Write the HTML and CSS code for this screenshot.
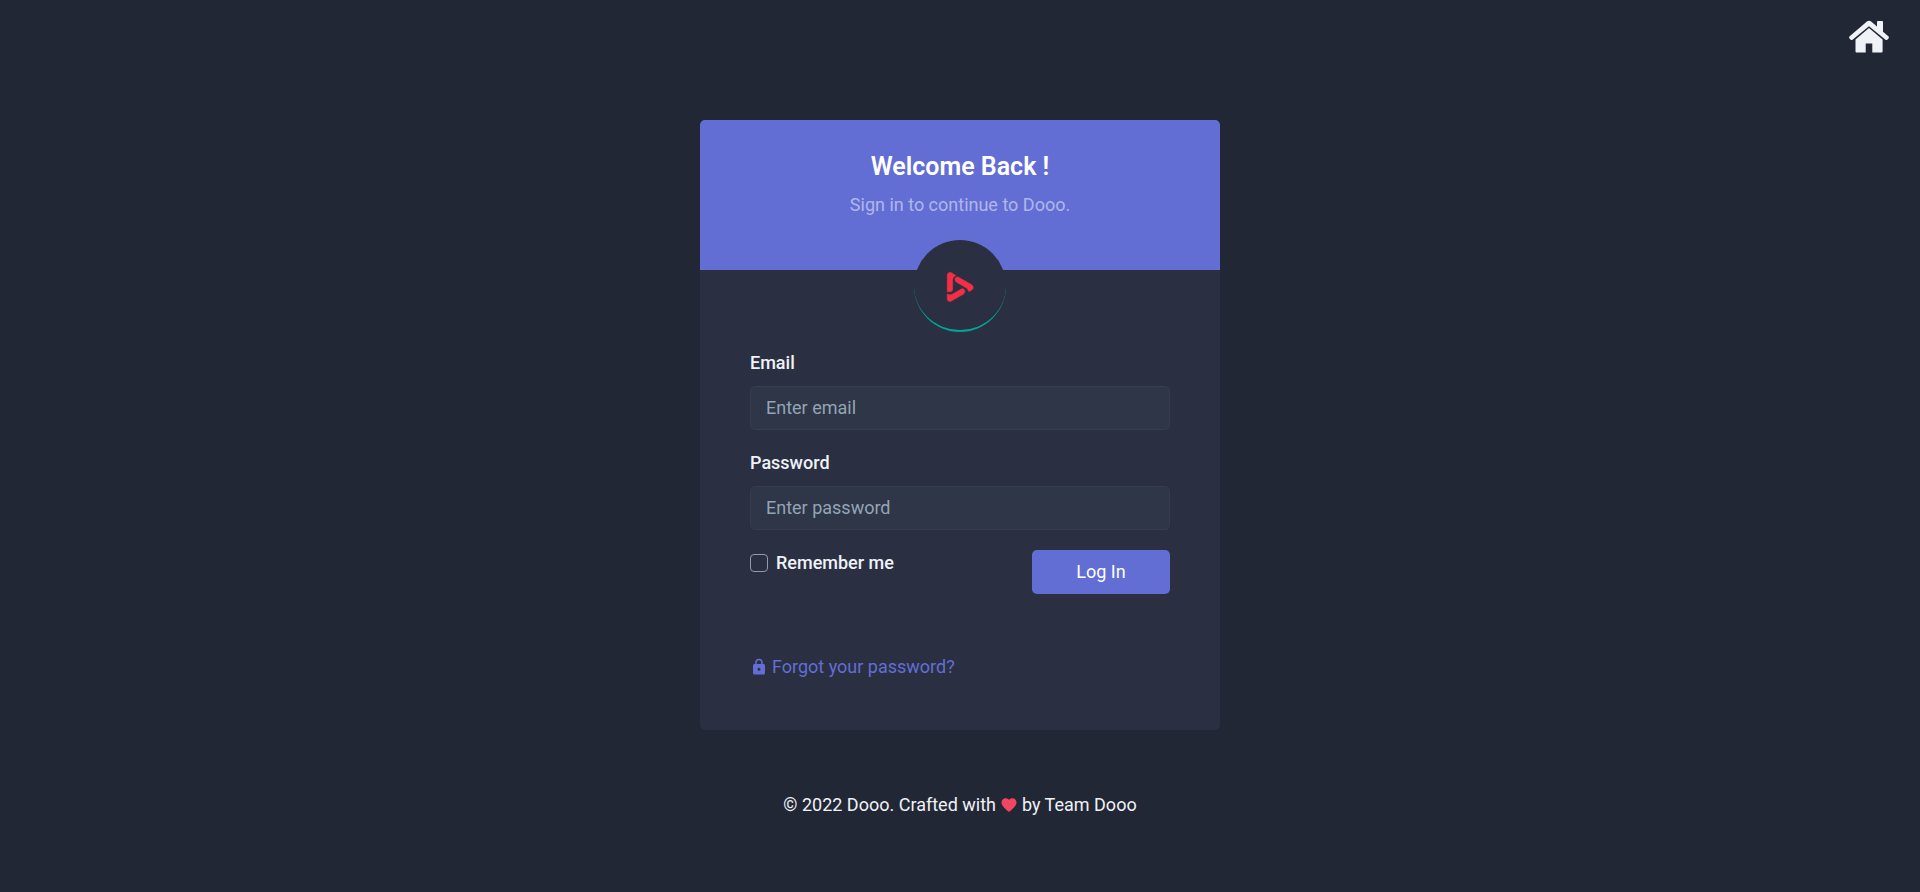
FILE: index.html
```html
<!DOCTYPE html>
<html lang="en">

<head>
    <meta charset="UTF-8">
    <meta name="viewport" content="width=device-width, initial-scale=1">
    <title>Login | Dooo</title>
    <link rel="stylesheet" href="styles.css">
</head>

<body>
    <header class="home-bar">
        <a href="#" class="home-link" aria-label="Home">
            <svg width="40" height="34" viewBox="0 0 40 34" fill="currentColor">
                <path d="M20 0.8c.8 0 1.5.3 2.1.8L28 6.6V1.8c0-.5.4-.8.8-.8h4.4c.5 0 .8.3.8.8v9.9l5.3 4.5c.7.6.8 1.5.2 2.2l-1 1.2c-.5.6-1.4.7-2 .2L20 6.2 3.5 19.8c-.6.5-1.5.4-2-.2l-1-1.2c-.6-.7-.5-1.6.2-2.2L17.9 1.6c.6-.5 1.3-.8 2.1-.8z"></path>
                <path d="M20 8 33.6 19.4V31.6c0 .6-.4.9-.9.9h-9.4v-9h-6.6v9H7.4c-.5 0-.9-.3-.9-.9V19.4z"></path>
            </svg>
        </a>
    </header>

    <main class="account-page">
        <div class="card">
            <div class="card-top">
                <h1>Welcome Back !</h1>
                <p>Sign in to continue to Dooo.</p>
                <a href="#" class="logo" aria-label="Dooo">
                    <svg width="28" height="32" viewBox="0 0 28 32" fill="#f22f46" stroke="#f22f46" stroke-width=".6" stroke-linejoin="round">
                        <path d="M1.3 4.2C1.3 1.8 3.4.8 5.4 1.8l4.4 2.7c-2.2 1.1-3.2 2.7-3.2 5v8.8c0 1.6-1 2.4-2.9 2.5H1.3z"></path>
                        <path d="M9.1 8.9c-.7-1.5 1.2-3.9 3.8-2.5l12.7 7.3c2.2 1.4 2 4.2.3 5.2l-3.1 1.7c-.5-2.3-1.4-3.1-3.2-4.2l-9.4-5.4c-.6-.4-.9-1.2-1.1-2.1z"></path>
                        <path d="M1.3 23.1c2 1.1 3.7.9 5.4 0l8.5-5c1.5-.9 3.6 0 3.6 2.2 0 1.6-.5 2.3-1.7 3L5.2 30.1C3.2 31.2 1.3 30 1.3 27.6z"></path>
                    </svg>
                </a>
            </div>

            <form class="login-form">
                <div class="field">
                    <label for="email">Email</label>
                    <input type="email" id="email" class="text-input" placeholder="Enter email">
                </div>
                <div class="field">
                    <label for="password">Password</label>
                    <input type="password" id="password" class="text-input" placeholder="Enter password">
                </div>
                <div class="actions">
                    <div class="remember">
                        <input type="checkbox" id="remember">
                        <label for="remember">Remember me</label>
                    </div>
                    <button type="submit" class="login-button">Log In</button>
                </div>
                <a href="#" class="forgot">
                    <svg width="18" height="18" viewBox="0 0 24 24" fill="currentColor">
                        <path d="M12 17a2 2 0 1 0 0-4 2 2 0 0 0 0 4zm6-9a2 2 0 0 1 2 2v10a2 2 0 0 1-2 2H6a2 2 0 0 1-2-2V10a2 2 0 0 1 2-2h1V6a5 5 0 0 1 10 0v2h1zm-6-5a3 3 0 0 0-3 3v2h6V6a3 3 0 0 0-3-3z"></path>
                    </svg>
                    <span>Forgot your password?</span>
                </a>
            </form>
        </div>

        <footer>
            <span>© 2022 Dooo. Crafted with</span>
            <svg width="18" height="18" viewBox="0 0 24 24" fill="#f14560">
                <path d="M12 21.4l-1.5-1.3C5.4 15.4 2 12.3 2 8.5 2 5.4 4.4 3 7.5 3c1.7 0 3.4.8 4.5 2.1C13.1 3.8 14.8 3 16.5 3 19.6 3 22 5.4 22 8.5c0 3.8-3.4 6.9-8.5 11.5z"></path>
            </svg>
            <span>by Team Dooo</span>
        </footer>
    </main>
</body>

</html>
```

FILE: styles.css
```css
* {
    box-sizing: border-box;
}

body {
    margin: 0;
    background-color: #222736;
    color: #eff2f7;
    font-family: Roboto, sans-serif;
    font-size: 18px;
    line-height: 26px;
}

h1,
p {
    margin: 0;
}

a {
    color: #626ed4;
    text-decoration: none;
}

svg {
    display: block;
}

.home-bar {
    display: flex;
    justify-content: flex-end;
    padding: 20px 31px 0;
}

.home-link {
    color: #eff2f7;
}

.account-page {
    display: flex;
    flex-direction: column;
    align-items: center;
    padding: 66px 20px;
}

.card {
    width: 100%;
    max-width: 520px;
    border-radius: 5px;
    background-color: #2a3042;
}

.card-top {
    display: flex;
    flex-direction: column;
    align-items: center;
    height: 150px;
    padding-top: 31px;
    border-radius: 5px 5px 0 0;
    background-color: #626ed4;
}

.card-top h1 {
    margin-bottom: 9px;
    color: #fff;
    font-size: 25px;
    font-weight: 600;
    line-height: 32px;
}

.card-top p {
    margin-bottom: 22px;
    color: rgba(255, 255, 255, .5);
}

.logo {
    display: flex;
    flex-shrink: 0;
    align-items: center;
    justify-content: center;
    width: 92px;
    height: 92px;
    padding-top: 4px;
    border-bottom: 2px solid #02a499;
    border-radius: 50%;
    background-color: #2a3042;
}

.login-form {
    padding: 80px 50px 50px;
}

.field {
    margin-bottom: 20px;
}

label {
    font-weight: 500;
}

.field label {
    display: block;
    margin-bottom: 10px;
}

.text-input {
    display: block;
    width: 100%;
    height: 44px;
    padding: 7px 15px 9px;
    border: 1px solid #353d50;
    border-radius: 5px;
    outline: none;
    background-color: #2e3648;
    color: #bfc8e2;
    font: inherit;
}

.text-input::placeholder {
    color: #93a5b5;
    opacity: 1;
}

.text-input:focus {
    border-color: #626ed4;
}

.actions {
    display: flex;
    align-items: flex-start;
    justify-content: space-between;
}

.remember {
    display: flex;
    align-items: center;
    gap: 8px;
}

.remember input {
    appearance: none;
    width: 18px;
    height: 18px;
    margin: 0;
    border: 1px solid #959aa6;
    border-radius: 4px;
}

.remember input:checked {
    border-color: #626ed4;
    background-color: #626ed4;
}

.login-button {
    width: 138px;
    height: 44px;
    padding: 0;
    border: 0;
    border-radius: 5px;
    background-color: #626ed4;
    color: #fff;
    font: inherit;
    cursor: pointer;
}

.forgot {
    display: flex;
    align-items: center;
    gap: 4px;
    width: fit-content;
    margin-top: 60px;
}

footer {
    display: flex;
    align-items: center;
    gap: 4px;
    margin-top: 62px;
}
```
